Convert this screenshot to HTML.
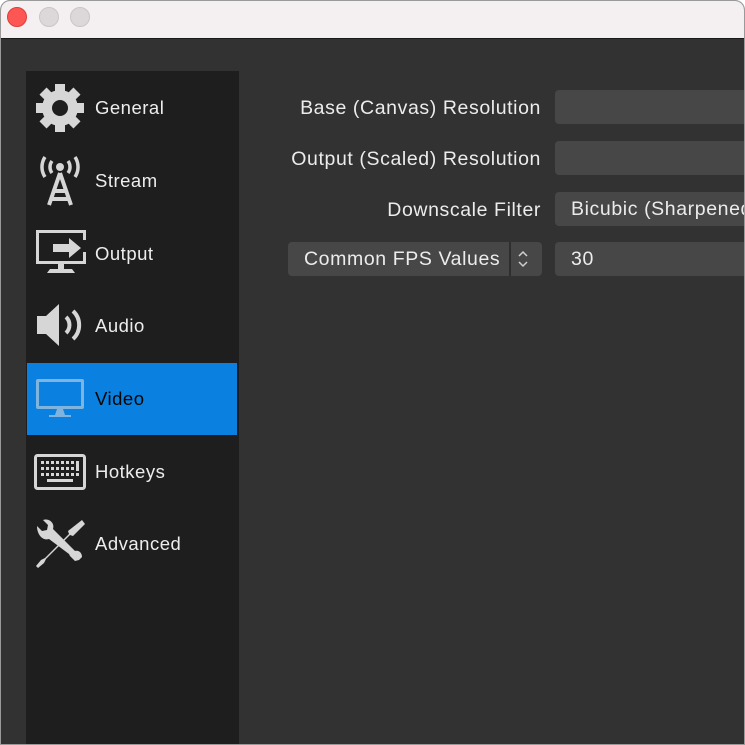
<!DOCTYPE html>
<html><head><style>
*{margin:0;padding:0;box-sizing:border-box}
body{width:745px;height:745px;overflow:hidden;background:#fff;font-family:"Liberation Sans",sans-serif}
.win{position:absolute;left:0;top:0;width:745px;height:745px;border:1px solid #9a9a9a;border-radius:10px 10px 0 0;overflow:hidden;background:#323232}
.title{position:absolute;left:0;top:0;width:745px;height:38px;background:#f4eff1;border-bottom:1px solid #1a1a1a}
.dot{position:absolute;top:6px;width:20px;height:20px;border-radius:50%}
.side{position:absolute;left:25px;top:70px;width:213px;height:680px;background:#1e1e1e}
.item{position:absolute;left:1px;width:210px;height:72px;color:#ededed;font-size:18.5px;letter-spacing:0.5px}
.item span{position:absolute;left:68px;top:50%;transform:translateY(-50%)}
.item svg{position:absolute;left:7px;top:10px}
.sel{background:#0a81e0;color:#050505}
.lab{position:absolute;right:203px;color:#ececec;font-size:19.5px;letter-spacing:0.6px;text-align:right;white-space:nowrap}
.box{position:absolute;left:554px;width:200px;height:34px;background:#474747;border-radius:4px;color:#ececec;font-size:19.5px;letter-spacing:0.6px;padding:6px 0 0 16px;white-space:nowrap;overflow:hidden}
</style></head><body>
<div class="win">
<div class="title">
<div class="dot" style="left:6px;background:#fc5753;border:1px solid #df3d3a"></div>
<div class="dot" style="left:38px;background:#dcd7d9;border:1px solid #cac5c7"></div>
<div class="dot" style="left:69px;background:#dcd7d9;border:1px solid #cac5c7"></div>
</div>
<div class="side">
<div class="item" style="top:1px"><svg width="52" height="52" viewBox="0 0 52 52"><g fill="#d6d6d6"><circle cx="26" cy="26" r="18"/><g id="t"><rect x="21" y="2" width="10" height="10"/></g><use href="#t" transform="rotate(45 26 26)"/><use href="#t" transform="rotate(90 26 26)"/><use href="#t" transform="rotate(135 26 26)"/><use href="#t" transform="rotate(180 26 26)"/><use href="#t" transform="rotate(225 26 26)"/><use href="#t" transform="rotate(270 26 26)"/><use href="#t" transform="rotate(315 26 26)"/></g><circle cx="26" cy="26" r="8" fill="#1e1e1e"/></svg><span>General</span></div>
<div class="item" style="top:74px"><svg width="52" height="52" viewBox="0 0 52 52" fill="none" stroke="#d6d6d6" stroke-width="3.5"><circle cx="26" cy="12" r="4" fill="#d6d6d6" stroke="none"/><path d="M18 6a10 10 0 0 0 0 12M34 6a10 10 0 0 1 0 12M11 2a18 18 0 0 0 0 20M41 2a18 18 0 0 1 0 20"/><path d="M26 18L15 50M26 18L37 50M20 36h12M17 44h18" stroke-width="4"/></svg><span>Stream</span></div>
<div class="item" style="top:147px"><svg width="52" height="52" viewBox="0 0 52 52"><path d="M2 2h50v10h-3V5H5v28h44v-9h3v12H30v5h8l3 4H13l3-4h8v-5H2z" fill="#d6d6d6"/><path d="M19 16h16v-6l12 10-12 10v-6H19z" fill="#d6d6d6"/></svg><span>Output</span></div>
<div class="item" style="top:219px"><svg width="52" height="52" viewBox="0 0 52 52"><path d="M3 16h9l13-12v42L12 34H3z" fill="#d6d6d6"/><path d="M32 17a11 11 0 0 1 0 16M39 11a19 19 0 0 1 0 28" fill="none" stroke="#d6d6d6" stroke-width="4"/></svg><span>Audio</span></div>
<div class="item sel" style="top:292px"><svg width="52" height="52" viewBox="0 0 52 52"><rect x="2" y="6" width="48" height="30" rx="2" fill="#7fb4df"/><rect x="5" y="9" width="42" height="24" fill="#0a81e0"/><path d="M23 36h6l2 6h6v2H15v-2h6z" fill="#7fb4df"/></svg><span>Video</span></div>
<div class="item" style="top:365px"><svg width="52" height="52" viewBox="0 0 52 52"><rect x="1.5" y="9.5" width="49" height="33" rx="2" fill="none" stroke="#d6d6d6" stroke-width="3"/><g fill="#d6d6d6"><path d="M7 15h3v3H7zM12 15h3v3h-3zM17 15h3v3h-3zM22 15h3v3h-3zM27 15h3v3h-3zM32 15h3v3h-3zM37 15h3v3h-3zM42 15h3v10h-3zM7 21h3v3H7zM12 21h3v3h-3zM17 21h3v3h-3zM22 21h3v3h-3zM27 21h3v3h-3zM32 21h3v3h-3zM37 21h3v3h-3zM7 27h3v3H7zM12 27h3v3h-3zM17 27h3v3h-3zM22 27h3v3h-3zM27 27h3v3h-3zM32 27h3v3h-3zM37 27h3v3h-3zM42 27h3v3h-3zM13 33h26v3H13z"/></g></svg><span>Hotkeys</span></div>
<div class="item" style="top:437px"><svg width="52" height="52" viewBox="0 0 52 52" fill="#d6d6d6"><path d="M3 8l5 5 5-1 1-5-5-5c6-2 12 3 10 9l22 22c4-1 7 2 7 6l-3 3-4 1-5-5-1-2L15 21c-6 2-12-4-12-13z"/><path d="M48 2l3 4-12 12-3-1-24 24-2 4-6 5-2-2 5-6 4-2 24-24-1-3z"/></svg><span>Advanced</span></div>
</div>
<div class="lab" style="top:96px">Base (Canvas) Resolution</div>
<div class="box" style="top:89px"></div>
<div class="lab" style="top:147px">Output (Scaled) Resolution</div>
<div class="box" style="top:140px"></div>
<div class="lab" style="top:198px">Downscale Filter</div>
<div class="box" style="top:191px">Bicubic (Sharpened</div>
<div style="position:absolute;left:287px;top:241px;width:254px;height:34px;background:#474747;border-radius:4px;color:#ececec;font-size:19.5px;letter-spacing:0.6px;padding:6px 0 0 16px;white-space:nowrap">Common FPS Values
<div style="position:absolute;left:221px;top:0;width:2px;height:34px;background:#2e2e2e"></div>
<svg style="position:absolute;left:229px;top:8px" width="12" height="18" viewBox="0 0 12 18" fill="none" stroke="#cfcfcf" stroke-width="1.5"><path d="M2 6l4-4 4 4M2 12l4 4 4-4"/></svg></div>
<div class="box" style="top:241px">30</div>
</div>
</body></html>
